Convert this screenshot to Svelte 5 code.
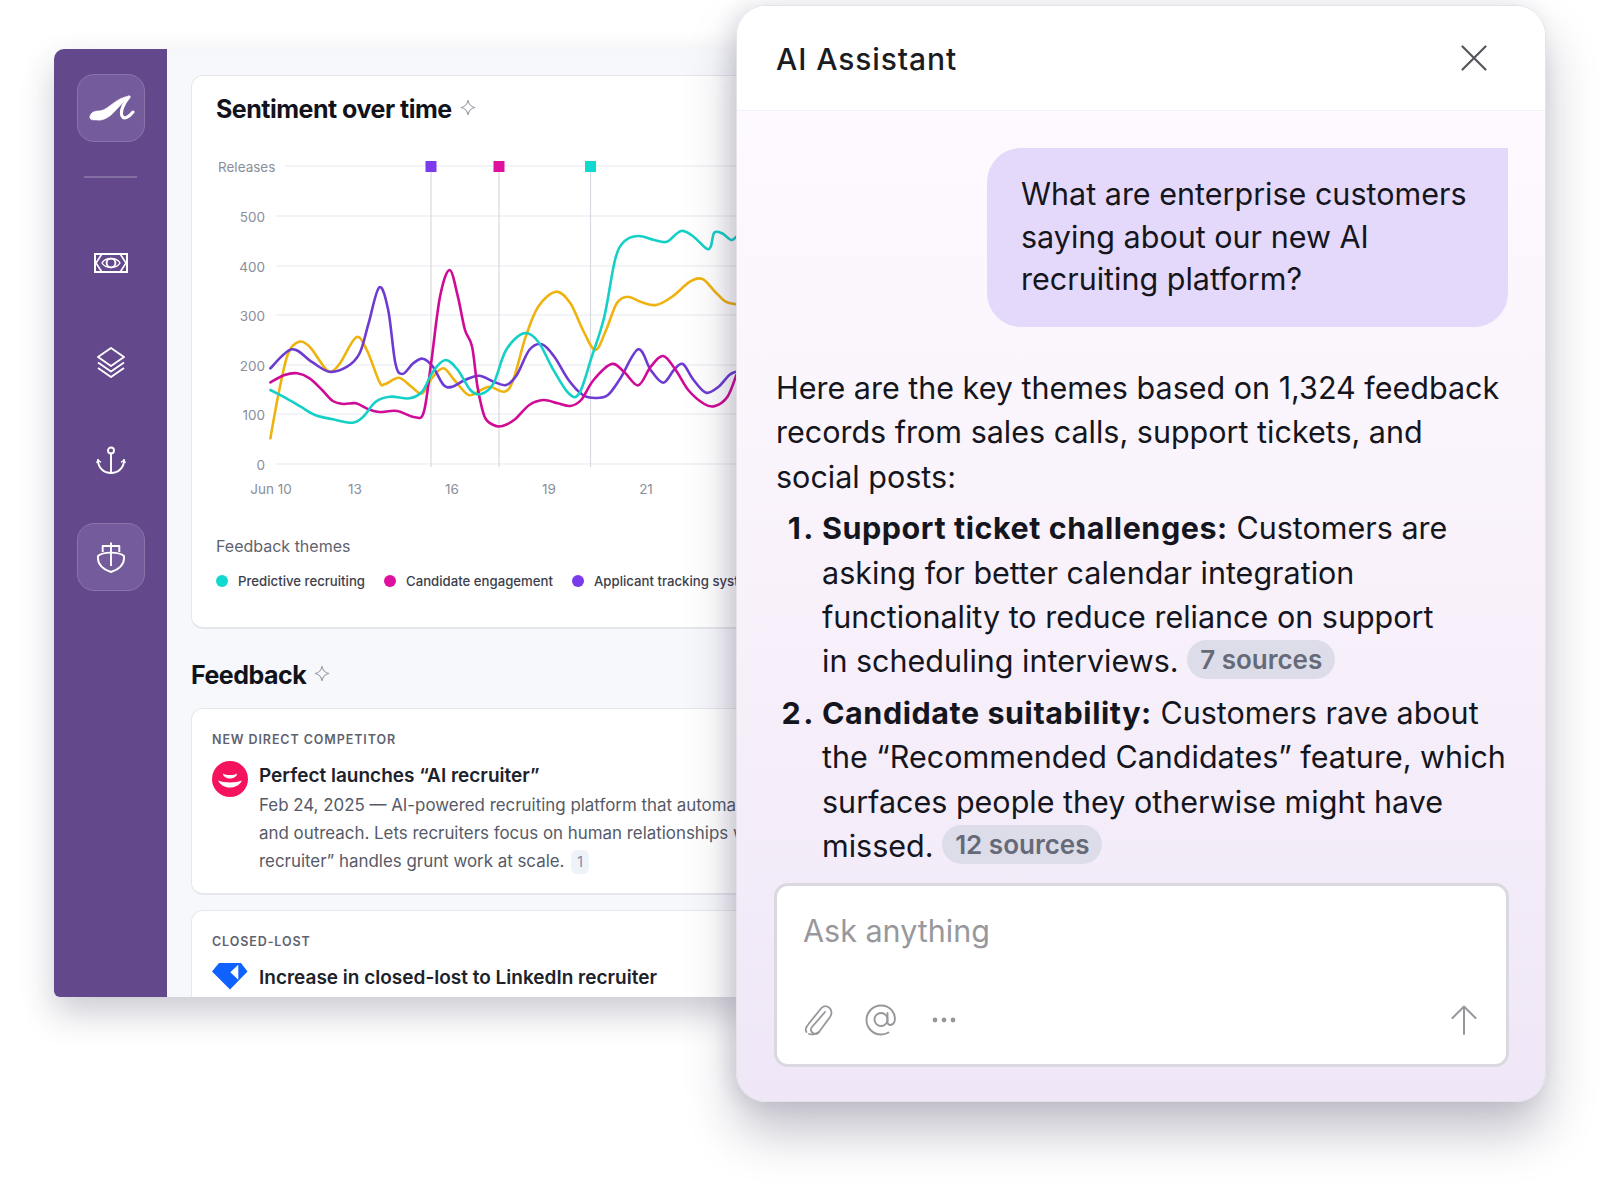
<script>
  // Chart points were read off a crop of the chart, so map them back to px
  const px = ([x, y]) => [x / 2.8, 70 + y / 3 - 150];

  function smooth(points) {
    const p = points.map(px);
    let d = `M${p[0][0].toFixed(1)} ${p[0][1].toFixed(1)}`;
    for (let i = 0; i < p.length - 1; i++) {
      const a = p[i - 1] || p[i];
      const b = p[i];
      const c = p[i + 1];
      const e = p[i + 2] || c;
      const c1 = [b[0] + (c[0] - a[0]) / 6, b[1] + (c[1] - a[1]) / 6];
      const c2 = [c[0] - (e[0] - b[0]) / 6, c[1] - (e[1] - b[1]) / 6];
      d += `C${c1[0].toFixed(1)} ${c1[1].toFixed(1)} ${c2[0].toFixed(1)} ${c2[1].toFixed(1)} ${c[0].toFixed(1)} ${c[1].toFixed(1)}`;
    }
    return d;
  }

  const series = [
    {
      color: '#eeb30f',
      points: [[225,1105],[250,960],[275,850],[305,815],[335,830],[375,890],[395,905],[420,880],[465,802],[495,840],[530,935],[545,943],[585,923],[620,950],[650,970],[680,920],[710,895],[740,930],[780,975],[815,960],[840,950],[880,965],[905,930],[940,800],[975,710],[1025,665],[1065,700],[1100,780],[1135,840],[1165,780],[1195,700],[1225,680],[1265,697],[1305,705],[1350,680],[1400,635],[1435,627],[1470,665],[1500,695],[1530,703]],
    },
    {
      color: '#6d3bd1',
      points: [[225,895],[285,838],[340,875],[390,905],[440,890],[475,850],[500,760],[530,652],[555,720],[575,880],[595,912],[625,880],[652,866],[680,890],[710,945],[735,950],[770,930],[810,917],[850,935],[885,945],[915,915],[950,840],[985,823],[1020,860],[1060,930],[1100,975],[1135,984],[1170,975],[1205,925],[1255,838],[1290,900],[1325,938],[1355,900],[1380,882],[1410,930],[1445,968],[1480,950],[1510,915],[1530,905]],
    },
    {
      color: '#cf0a96',
      points: [[225,937],[265,915],[300,910],[335,925],[370,960],[400,993],[430,1002],[465,1000],[500,1018],[530,1026],[580,1023],[630,1042],[655,1025],[675,880],[700,680],[727,600],[750,680],[770,780],[790,830],[805,950],[825,1040],[850,1065],[875,1068],[910,1048],[950,1005],[990,990],[1030,1000],[1065,1008],[1095,990],[1130,930],[1180,882],[1215,905],[1255,946],[1290,890],[1325,858],[1360,900],[1395,960],[1440,1002],[1470,1008],[1505,980],[1530,915]],
    },
    {
      color: '#14d0c6',
      points: [[225,960],[270,985],[310,1010],[350,1035],[400,1048],[455,1058],[485,1040],[520,995],[560,980],[615,985],[650,965],[680,905],[715,870],[750,900],[785,960],[815,972],[850,940],[885,840],[935,790],[975,815],[1015,895],[1060,970],[1090,970],[1125,860],[1160,740],[1190,570],[1215,515],[1255,498],[1300,510],[1335,515],[1375,483],[1410,500],[1445,535],[1458,530],[1468,488],[1490,490],[1515,510],[1530,500]],
    },
  ];

  const yTicks = [
    { label: '500', y: 66 },
    { label: '400', y: 116 },
    { label: '300', y: 165 },
    { label: '200', y: 215 },
    { label: '100', y: 264 },
    { label: '0', y: 314 },
  ];
  const xTicks = [
    { label: 'Jun 10', x: 81 },
    { label: '13', x: 165 },
    { label: '16', x: 262 },
    { label: '19', x: 359 },
    { label: '21', x: 456 },
  ];
  const releases = [
    { x: 241, color: '#7c3aed' },
    { x: 309, color: '#e0109f' },
    { x: 400.5, color: '#10d9cf' },
  ];
  const legend = [
    { label: 'Predictive recruiting', color: '#10d9cf' },
    { label: 'Candidate engagement', color: '#e0109f' },
    { label: 'Applicant tracking systems', color: '#7c3aed' },
  ];
</script>

{#snippet sparkle()}
  <svg class="sparkle" width="16" height="17" viewBox="0 0 16 17" fill="none">
    <path d="M8 1C8.6 5.5 10.5 7.6 15 8.5C10.5 9.4 8.6 11.5 8 16C7.4 11.5 5.5 9.4 1 8.5C5.5 7.6 7.4 5.5 8 1Z" stroke="#9a9ca6" stroke-width="1.1" />
  </svg>
{/snippet}

<div class="stage">
  <div class="window">
    <nav class="sidebar">
      <div class="tile logo">
        <svg width="48" height="30" viewBox="0 0 48 30" fill="none" stroke="#fff" stroke-linecap="round">
          <path d="M3 24C3 20 7 18 11 18C16 18 20 15 24 12C30 7 36 4 42 3C38 7 33 13 28 18C23 24 16 28 10 27C6 26.500 3 28 3 24Z" fill="#fff" stroke-width="0.6" />
          <path d="M42 4C37 10 33 18 35 23C37 27 42 24 46 19" stroke-width="3" />
        </svg>
      </div>
      <div class="divider"></div>

      <div class="nav-icon first">
        <svg width="34" height="20" viewBox="0 0 34 20" fill="none" stroke="#fff" stroke-width="2">
          <rect x="1" y="1" width="32" height="18" />
          <circle cx="17" cy="10" r="4.400" stroke-width="1.900" />
          <path d="M7.500 1.500L2 10L7.500 18.500M26.500 1.500L32 10L26.500 18.500" stroke-width="1.600" />
          <path d="M8 10C11.500 4 22.500 4 26 10C22.500 16 11.500 16 8 10Z" stroke-width="1.400" />
        </svg>
      </div>
      <div class="nav-icon">
        <svg width="30" height="31" viewBox="0 0 30 31" fill="none" stroke="#fff" stroke-width="1.900" stroke-linejoin="round">
          <path d="M15 1L28 10L15 19L2 10Z" />
          <path d="M2 15.500L15 24.500L28 15.500" />
          <path d="M2 21L15 30L28 21" />
        </svg>
      </div>
      <div class="nav-icon">
        <svg width="30" height="30" viewBox="0 0 30 30" fill="none" stroke="#fff" stroke-width="1.900" stroke-linecap="round">
          <circle cx="15" cy="4.500" r="3" />
          <path d="M15 7.500V27" />
          <path d="M2 14C2 22 8 27 15 27C22 27 28 22 28 14" />
          <path d="M2 14L0.800 16.500M2 14L4.500 16M28 14L29.200 16.500M28 14L25.500 16" stroke-width="1.300" />
        </svg>
      </div>
      <div class="tile boat">
        <svg width="30" height="32" viewBox="0 0 30 32" fill="none" stroke="#fff" stroke-width="1.900" stroke-linejoin="round">
          <path d="M15 1.500V25" />
          <path d="M6.700 11V5H23.300V11" />
          <path d="M2 15C7 10.500 23 10.500 28 15C29 24 22 28.500 15 31C8 28.500 1 24 2 15Z" />
        </svg>
      </div>
    </nav>

    <main class="main">
      <section class="card chart-card">
        <h2>Sentiment over time {@render sparkle()}</h2>
        <svg class="chart" width="560" height="360" viewBox="0 0 560 360" fill="none">
          <text class="tick" x="28" y="22">Releases</text>
          <path d="M95 16H560" stroke="#e8e9ef" stroke-width="1.2" />
          {#each yTicks as t}
            <path d="M86 {t.y}H560" stroke="#e8e9ef" stroke-width="1.2" />
            <text class="tick y-tick" x="75" y={t.y + 6}>{t.label}</text>
          {/each}
          {#each releases as r}
            <path d="M{r.x} 16V317" stroke="#d8d9e0" stroke-width="1.2" />
            <rect x={r.x - 5.5} y="11" width="11" height="11" fill={r.color} />
          {/each}
          {#each series as s}
            <path d={smooth(s.points)} stroke={s.color} stroke-width="2.6" stroke-linecap="round" />
          {/each}
          {#each xTicks as t}
            <text class="tick x-tick" x={t.x} y="344">{t.label}</text>
          {/each}
        </svg>
        <div class="legend-title">Feedback themes</div>
        <div class="legend">
          {#each legend as item}
            <span class="legend-item"><i class="dot" style="background: {item.color}"></i>{item.label}</span>
          {/each}
        </div>
      </section>

      <h2 class="section-title">Feedback {@render sparkle()}</h2>

      <section class="card feed-card">
        <div class="eyebrow">NEW DIRECT COMPETITOR</div>
        <div class="feed-row">
          <svg class="feed-logo" width="36" height="36" viewBox="0 0 36 36">
            <circle cx="18" cy="18" r="18" fill="#f5135d" />
            <path d="M11 12.500C14 14.500 22 14.500 25 12.500C25 16 21 17.500 18 17.500C15 17.500 11 16 11 12.500Z" fill="#fff" />
            <path d="M6 19.500C12 22 24 22 30 19.500C27 25 22 26.500 18 26.500C14 26.500 9 25 6 19.500Z" fill="#fff" />
          </svg>
          <div>
            <h3>Perfect launches “AI recruiter”</h3>
            <p>
              Feb 24, 2025 — AI-powered recruiting platform that automates sourcing<br />
              and outreach. Lets recruiters focus on human relationships while the “AI<br />
              recruiter” handles grunt work at scale. <span class="cite">1</span>
            </p>
          </div>
        </div>
      </section>

      <section class="card feed-card">
        <div class="eyebrow">CLOSED-LOST</div>
        <div class="feed-row short">
          <svg class="feed-logo" width="36" height="28" viewBox="0 0 36 28">
            <path d="M7 0H29L35.500 8.500L18 26.500L0 8.500Z" fill="#0f62fe" />
            <path d="M18.300 9.300L26.300 1.700V16.700Z" fill="#fff" />
          </svg>
          <h3>Increase in closed-lost to LinkedIn recruiter</h3>
        </div>
      </section>
    </main>
  </div>

  <aside class="panel">
    <header class="panel-head">
      <h1>AI Assistant</h1>
      <svg width="26" height="26" viewBox="0 0 26 26" stroke="#55565c" stroke-width="2.200" stroke-linecap="round">
        <path d="M1.500 1.500L24.500 24.500M24.500 1.500L1.500 24.500" />
      </svg>
    </header>

    <div class="thread">
      <div class="bubble">
        What are enterprise customers<br />
        saying about our new AI<br />
        recruiting platform?
      </div>

      <p class="answer">
        Here are the key themes based on 1,324 feedback<br />
        records from sales calls, support tickets, and<br />
        social posts:
      </p>
      <div class="item">
        <b class="num">1.</b>
        <div>
          <b>Support ticket challenges:</b> Customers are<br />
          asking for better calendar integration<br />
          functionality to reduce reliance on support<br />
          in scheduling interviews. <span class="chip">7 sources</span>
        </div>
      </div>
      <div class="item">
        <b class="num">2.</b>
        <div>
          <b>Candidate suitability:</b> Customers rave about<br />
          the “Recommended Candidates” feature, which<br />
          surfaces people they otherwise might have<br />
          missed. <span class="chip">12 sources</span>
        </div>
      </div>
    </div>

    <div class="composer">
      <div class="placeholder">Ask anything</div>
      <div class="tools">
        <svg class="clip" width="30" height="32" viewBox="0 0 30 32" fill="none" stroke="#97979b" stroke-width="1.800" stroke-linecap="round">
          <path d="M22 8L9 23C7 25.500 8 28 10 29C12 30.500 14.500 29.500 16 28L27 13C29.500 9.500 28.500 5.500 26 3.500C23 1.500 20 2 18 4.500L5.500 20C2.500 23.500 2 26 3.500 28" />
          <path d="M16 28C14 30 9 31 6 30" />
        </svg>
        <svg class="at" width="32" height="32" viewBox="0 0 32 32" fill="none" stroke="#97979b" stroke-width="1.900" stroke-linecap="round">
          <circle cx="16" cy="15.500" r="6.500" />
          <path d="M22.500 9V18C22.500 22 28 22 29.500 17.500C31.500 9 25 1.500 16 1.500C8 1.500 1.500 8 1.500 16C1.500 24 8 30.500 16 30.500C19 30.500 21.500 29.800 23.500 28.500" />
        </svg>
        <svg class="more" width="24" height="6" viewBox="0 0 24 6" fill="#97979b">
          <circle cx="3" cy="3" r="2.400" />
          <circle cx="12" cy="3" r="2.400" />
          <circle cx="21" cy="3" r="2.400" />
        </svg>
        <svg class="send" width="26" height="30" viewBox="0 0 26 30" fill="none" stroke="#97979b" stroke-width="2" stroke-linecap="round" stroke-linejoin="round">
          <path d="M13 29V1.500M1.500 13L13 1.500L24.500 13" />
        </svg>
      </div>
    </div>
  </aside>
</div>

<style>
  :global(body) {
    background: #fff;
  }

  .stage {
    position: relative;
    width: 1600px;
    height: 1200px;
    overflow: hidden;
    font-family: Inter, 'Noto Sans', sans-serif;
    color: #14161f;
  }

  /* back window, the chat panel sits over its right edge */
  .window {
    position: absolute;
    left: 54px;
    top: 49px;
    width: 692px;
    height: 948px;
    display: flex;
    overflow: hidden;
    border-radius: 10px 0 0 6px;
    background: #f7f8fb;
    box-shadow: 0 16px 34px rgba(40, 36, 70, 0.24);
  }

  .sidebar {
    flex: 0 0 113px;
    display: flex;
    flex-direction: column;
    align-items: center;
    padding-top: 25px;
    background: #63488c;
  }

  .tile {
    width: 68px;
    height: 68px;
    flex: none;
    display: flex;
    align-items: center;
    justify-content: center;
    box-sizing: border-box;
    border: 1.5px solid #8b74ab;
    border-radius: 17px;
    background: #745b9b;
  }

  .divider {
    width: 53px;
    height: 2px;
    margin-top: 34px;
    background: #8570a6;
  }

  .nav-icon {
    height: 30px;
    margin-top: 69px;
    display: flex;
    align-items: center;
    justify-content: center;
  }

  .nav-icon.first {
    margin-top: 70px;
  }

  .boat {
    margin-top: 47px;
  }

  .main {
    flex: 1;
    min-width: 0;
    padding: 26px 0 0 24px;
    overflow: hidden;
  }

  .card {
    box-sizing: border-box;
    width: 640px;
    border: 1px solid #e6e7ec;
    border-bottom-width: 2px;
    border-radius: 12px;
    background: #fff;
  }

  .chart-card {
    height: 554px;
    padding: 17px 24px 0;
  }

  h2 {
    display: flex;
    align-items: center;
    gap: 8px;
    margin: -1px 0 1px;
    font-size: 25px;
    line-height: 34px;
    font-weight: 700;
    letter-spacing: -0.5px;
    color: #11131c;
  }

  .sparkle {
    margin-top: -3px;
  }

  .chart {
    display: block;
    margin: 24px 0 0 -26px;
  }

  .tick {
    fill: #8a8e9b;
    font-size: 13.500px;
  }

  .y-tick {
    text-anchor: end;
  }

  .x-tick {
    text-anchor: middle;
  }

  .legend-title {
    margin-top: 26px;
    font-size: 16px;
    line-height: 20px;
    color: #5f6370;
  }

  .legend {
    display: flex;
    gap: 19px;
    margin-top: 15px;
    white-space: nowrap;
  }

  .legend-item {
    display: flex;
    align-items: center;
    gap: 10px;
    font-size: 13.200px;
    line-height: 20px;
    font-weight: 500;
    color: #3d404b;
  }

  .dot {
    width: 12px;
    height: 12px;
    border-radius: 50%;
  }

  .section-title {
    margin-top: 29px;
    margin-bottom: 16px;
  }

  .feed-card {
    padding: 23px 20px 0;
    margin-bottom: 15px;
    height: 187px;
  }

  .eyebrow {
    font-size: 12.500px;
    line-height: 16px;
    font-weight: 600;
    letter-spacing: 0.9px;
    color: #5f6370;
  }

  .feed-row {
    display: flex;
    gap: 11px;
    margin-top: 13px;
  }

  .feed-row.short {
    align-items: center;
  }

  .feed-logo {
    flex: none;
  }

  h3 {
    margin: 2px 0 0;
    font-size: 19px;
    line-height: 26px;
    font-weight: 600;
    white-space: nowrap;
    color: #20222b;
  }

  .feed-row p {
    margin: 2px 0 0;
    font-size: 16.900px;
    line-height: 28px;
    white-space: nowrap;
    color: #565a67;
  }

  .cite {
    display: inline-block;
    width: 18px;
    margin-left: 2px;
    border-radius: 6px;
    font-size: 14px;
    line-height: 24px;
    text-align: center;
    background: #eef2f9;
    color: #7a8aa5;
  }

  .panel {
    position: absolute;
    left: 736px;
    top: 5px;
    width: 810px;
    height: 1097px;
    display: flex;
    flex-direction: column;
    overflow: hidden;
    box-sizing: border-box;
    border: 1.5px solid #e3e3e8;
    border-radius: 30px;
    background: linear-gradient(#fefbff, #f9f2fb 50%, #efe7f7);
    box-shadow: 0 30px 50px rgba(40, 32, 70, 0.28), -6px 0 20px rgba(40, 32, 70, 0.1);
  }

  .panel-head {
    flex: 0 0 104px;
    display: flex;
    align-items: center;
    justify-content: space-between;
    padding: 0 58px 0 39px;
    background: #fff;
    border-bottom: 1px solid #f5f1f8;
  }

  h1 {
    margin: 2px 0 0;
    font-size: 30px;
    font-weight: 500;
    letter-spacing: 0.9px;
    color: #1b1c22;
  }

  .thread {
    flex: 1;
    min-height: 0;
    overflow: hidden;
    padding: 37px 37px 0 39px;
    font-size: 30.500px;
    line-height: 44.400px;
    white-space: nowrap;
    color: #15161d;
  }

  .bubble {
    box-sizing: border-box;
    width: 521px;
    height: 179px;
    margin-left: auto;
    padding: 25px 34px;
    border-radius: 34px 0 34px 34px;
    font-size: 30.500px;
    line-height: 42.500px;
    background: #e4d9fa;
  }

  .answer {
    margin: 39px 0 7px;
  }

  .item {
    display: grid;
    grid-template-columns: 46px 1fr;
    margin-bottom: 7px;
  }

  .num {
    padding-right: 6px;
    letter-spacing: 2.500px;
    text-align: right;
  }

  b {
    font-weight: 700;
    letter-spacing: 0.550px;
  }

  .chip {
    display: inline-block;
    padding: 0 13px;
    border-radius: 20px;
    font-size: 26px;
    line-height: 39px;
    font-weight: 600;
    vertical-align: 3px;
    background: #dcdde8;
    color: #666a78;
  }

  .composer {
    flex: none;
    box-sizing: border-box;
    height: 184px;
    margin: 5px 36px 34px 37px;
    padding: 25px 29px 28px 26px;
    display: flex;
    flex-direction: column;
    justify-content: space-between;
    border: 3px solid #dad9df;
    border-radius: 14px;
    background: #fff;
  }

  .placeholder {
    font-size: 30.500px;
    line-height: 40px;
    color: #98989c;
  }

  .tools {
    display: flex;
    align-items: center;
    height: 32px;
  }

  .at {
    margin-left: 32px;
  }

  .more {
    margin-left: 35px;
  }

  .send {
    margin-left: auto;
  }
</style>
